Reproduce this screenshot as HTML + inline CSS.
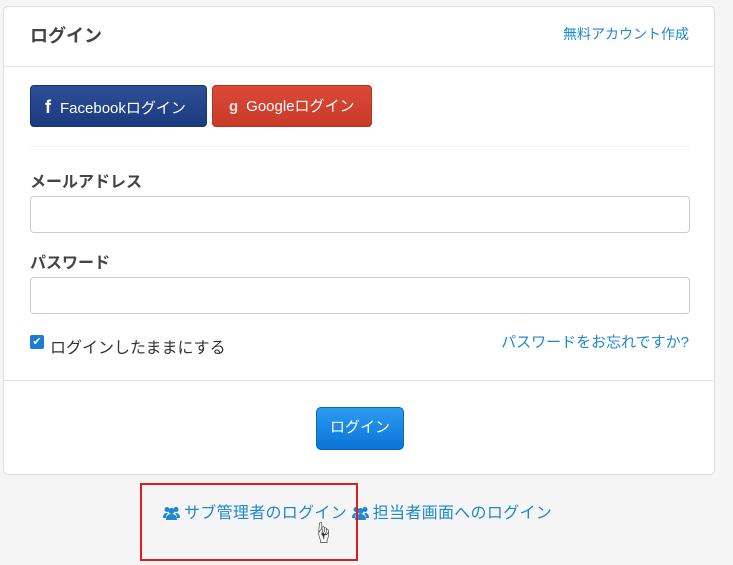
<!DOCTYPE html>
<html><head><meta charset="utf-8"><style>
body{margin:0;width:733px;height:565px;background:#f5f5f5;font-family:"Liberation Sans","Noto Sans CJK JP",sans-serif;position:relative;overflow:hidden;color:#333}
.panel{position:absolute;left:3px;top:6px;width:710px;height:467px;background:#fff;border:1px solid #ddd;border-radius:5px}
.a{position:absolute}
.inp{position:absolute;left:26px;width:658px;height:35px;border:1px solid #ccc;border-radius:4px;background:#fff}
.btn{position:absolute;top:78px;height:42px;border-radius:4px;color:#fff;font-size:15px;line-height:42px;box-sizing:border-box;font-weight:normal}
.ic{display:inline-block;vertical-align:-2px;margin-right:4px}
</style></head><body>
<div class="panel">
<div class="a" style="left:26px;top:15px;font-size:18px;font-weight:bold;color:#444">ログイン</div>
<div class="a" style="right:25px;top:17px;font-size:14px;color:#1e88d0">無料アカウント作成</div>
<div class="a" style="left:0;right:0;top:59px;border-top:1px solid #e5e5e5"></div>
<div class="btn" style="left:26px;width:177px;background:linear-gradient(#2e4f96,#1a3a80);border:1px solid #173370;padding-left:14px"><b style="font-size:18px;margin-right:9px">f</b>Facebookログイン</div>
<div class="btn" style="left:208px;width:160px;background:linear-gradient(#db4a37,#c93a28);border:1px solid #b33222;padding-left:16px"><b style="font-size:15px;margin-right:8px;color:#fdd">g</b>Googleログイン</div>
<div class="a" style="left:26px;right:25px;top:139px;border-top:1px dotted #e5e5e5"></div>
<div class="a" style="left:26px;top:161px;font-size:16px;font-weight:bold;color:#444">メールアドレス</div>
<div class="inp" style="top:189px"></div>
<div class="a" style="left:26px;top:242px;font-size:16px;font-weight:bold;color:#444">パスワード</div>
<div class="inp" style="top:270px"></div>
<div class="a" style="left:26px;top:328px;width:14px;height:14px;background:#1e7ad8;border-radius:2px;color:#fff;font-size:11px;line-height:14px;text-align:center">✔</div>
<div class="a" style="left:46px;top:327px;font-size:16px;color:#333">ログインしたままにする</div>
<div class="a" style="right:25px;top:324px;font-size:15px;color:#1e88d0">パスワードをお忘れですか?</div>
<div class="a" style="left:0;right:0;top:373px;border-top:1px solid #e5e5e5"></div>
<div class="a" style="left:312px;top:400px;width:86px;height:41px;border-radius:5px;background:linear-gradient(#2d9bf0,#0a74d8);border:1px solid #0b66c0;color:#fff;font-size:15px;line-height:40px;text-align:center">ログイン</div>
</div>
<div class="a" style="left:163px;top:499px;font-size:16px;color:#1e88d0;white-space:nowrap;letter-spacing:0.3px">
<svg class="ic" width="17" height="14" viewBox="0 0 17 14"><g fill="#1e88d0"><circle cx="4" cy="3.5" r="2.5"/><circle cx="13" cy="3.5" r="2.5"/><circle cx="8.5" cy="5" r="3"/><path d="M0 12c0-4 2-5 4-5h1c-1 1-2 3-2 5z M17 12c0-4-2-5-4-5h-1c1 1 2 3 2 5z M3 14c0-4 2-6 5.5-6S14 10 14 14z"/></g></svg>サブ管理者のログイン <svg class="ic" width="17" height="14" viewBox="0 0 17 14"><g fill="#1e88d0"><circle cx="4" cy="3.5" r="2.5"/><circle cx="13" cy="3.5" r="2.5"/><circle cx="8.5" cy="5" r="3"/><path d="M0 12c0-4 2-5 4-5h1c-1 1-2 3-2 5z M17 12c0-4-2-5-4-5h-1c1 1 2 3 2 5z M3 14c0-4 2-6 5.5-6S14 10 14 14z"/></g></svg>担当者画面へのログイン</div>
<div class="a" style="left:140px;top:483px;width:214px;height:74px;border:2px solid #d81e1e"></div>
<div class="a" style="left:312px;top:516px;font-size:22px">☝</div>
</body></html>
